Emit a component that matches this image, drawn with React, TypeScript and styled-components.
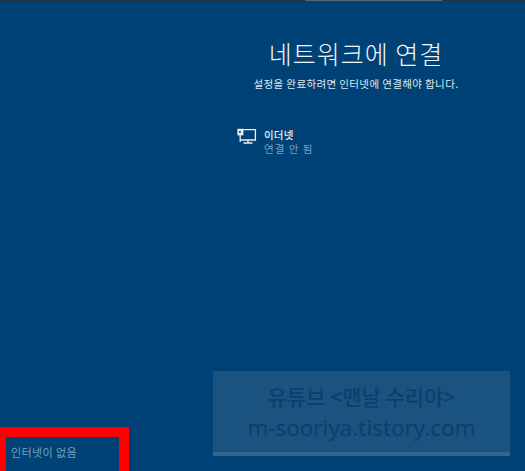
import { createGlobalStyle, styled } from "styled-components";

const GlobalStyle = createGlobalStyle`
  html, body {
    margin: 0;
    padding: 0;
    background: #004275;
  }
  body {
    font-family: "Noto Sans CJK KR", "Noto Sans", sans-serif;
  }
`;

function EthernetIcon() {
  return (
    <svg width="20" height="17" viewBox="0 0 20 17" fill="none" stroke="#e8f0f6" strokeWidth="1.3">
      <path d="M5 1.6h13.4v10.4H3.5" />
      <path d="M11 12v2.6M6.5 15h9" />
      <rect x="0.4" y="0.8" width="6" height="6.6" fill="#e8f0f6" stroke="none" />
      <path d="M3.2 7v7" />
      <rect x="2" y="3" width="1.8" height="1.8" fill="#004275" stroke="none" />
    </svg>
  );
}

function App() {
  return (
    <>
      <GlobalStyle />
      <Screen>
        <TopBar>
          <TopBarLight />
        </TopBar>
        <Content>
          <Title>네트워크에 연결</Title>
          <Subtitle>설정을 완료하려면 인터넷에 연결해야 합니다.</Subtitle>
          <NetworkRow>
            <EthernetIcon />
            <NetworkText>
              <NetworkName>이더넷</NetworkName>
              <NetworkStatus>연결 안 됨</NetworkStatus>
            </NetworkText>
          </NetworkRow>
        </Content>
        <Watermark>
          <WatermarkTitle>유튜브 &lt;맨날 수리야&gt;</WatermarkTitle>
          <WatermarkUrl>m-sooriya.tistory.com</WatermarkUrl>
        </Watermark>
        <NoInternet>인터넷이 없음</NoInternet>
      </Screen>
    </>
  );
}

const Screen = styled("div")`
  position: relative;
  width: 525px;
  height: 471px;
  overflow: hidden;
  background: #004275;
`;

const TopBar = styled("div")`
  height: 1px;
  padding-left: 305px;
  background: #1d3247;
`;

const TopBarLight = styled("div")`
  width: 137px;
  height: 1px;
  background: #5a6670;
`;

const Content = styled("div")`
  display: flex;
  flex-direction: column;
  width: 400px;
  margin-left: 156px;
  padding-top: 35px;
`;

const Title = styled("h1")`
  margin: 0;
  text-align: center;
  color: #f2f6f9;
  font-size: 25px;
  font-weight: 300;
  line-height: 34px;
  letter-spacing: 1px;
`;

const Subtitle = styled("p")`
  margin: 6px 0 0;
  text-align: center;
  color: #dfe9f0;
  font-size: 10.5px;
  font-weight: 400;
  line-height: 16px;
  letter-spacing: 0.38px;
`;

const NetworkRow = styled("div")`
  display: flex;
  align-items: flex-start;
  gap: 7px;
  margin: 36px 0 0 81px;
`;

const NetworkText = styled("div")`
  display: flex;
  flex-direction: column;
  font-size: 10.5px;
  line-height: 14px;
`;

const NetworkName = styled("span")`
  color: #e6eef4;
  font-weight: 500;
  letter-spacing: 0.2px;
`;

const NetworkStatus = styled("span")`
  color: #7ba1be;
  letter-spacing: 1px;
`;

const Watermark = styled("div")`
  position: absolute;
  left: 213px;
  top: 371px;
  box-sizing: border-box;
  width: 297px;
  height: 85px;
  padding-top: 10px;
  display: flex;
  flex-direction: column;
  align-items: center;
  background: #1a5280;
  border-bottom: 4px solid #33648e;
  color: #0c3f6d;
`;

const WatermarkTitle = styled("div")`
  font-size: 21px;
  font-weight: 500;
  line-height: 31px;
`;

const WatermarkUrl = styled("div")`
  font-family: "Noto Sans", sans-serif;
  font-size: 22.4px;
  line-height: 32px;
`;

const NoInternet = styled("div")`
  position: absolute;
  left: 0;
  top: 427px;
  box-sizing: border-box;
  width: 129px;
  height: 44px;
  padding: 8px 0 0 5px;
  border: solid #ff0000;
  border-width: 10px 10px 0 6px;
  color: #7ba1be;
  font-size: 11px;
  line-height: 14px;
  letter-spacing: 0.4px;
`;

export default App;
